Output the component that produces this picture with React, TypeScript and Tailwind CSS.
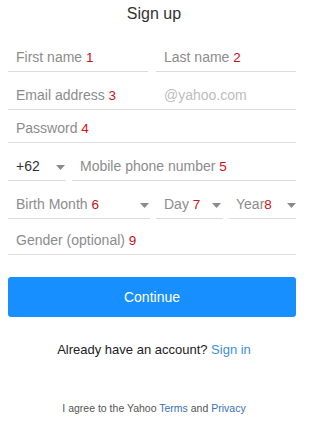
import React from 'react';

const font = { fontFamily: '"Liberation Sans", Arial, sans-serif' };

const Num = ({ n }: { n: string }) => (
  <span className="text-[13.5px] leading-none text-[#cc1020]">{n}</span>
);

const Caret = () => (
  <svg width="9" height="5" viewBox="0 0 9 5" className="shrink-0">
    <path d="M0 0h9L4.5 5z" fill="#8a8a8a" />
  </svg>
);

export default function App() {
  return (
    <div className="w-[308px] h-[427px] bg-white" style={font}>
      <h1 className="pt-1 text-center text-[16px] leading-5 text-[#333]">Sign up</h1>

      <form className="mt-3 ml-2 w-[288px] flex flex-col text-[14px] leading-5 text-[#8c8c8c]">
        <div className="h-[36px] grid grid-cols-2 gap-2">
          <div className="flex items-end pl-2 pb-1 border-b border-[#dcdcdc]">
            <span>First name <Num n="1" /></span>
          </div>
          <div className="flex items-end pl-2 pb-1 border-b border-[#dcdcdc]">
            <span>Last name <Num n="2" /></span>
          </div>
        </div>

        <div className="h-[38px] grid grid-cols-2 gap-2 border-b border-[#dcdcdc]">
          <div className="flex items-end pl-2 pb-1">
            <span>Email address <Num n="3" /></span>
          </div>
          <div className="flex items-end pl-2 pb-1 text-[#bdbdbd]">@yahoo.com</div>
        </div>

        <div className="h-[33px] flex items-end pl-2 pb-1 border-b border-[#dcdcdc]">
          <span>Password <Num n="4" /></span>
        </div>

        <div className="h-[38px] flex gap-[6px]">
          <div className="w-[58px] flex items-end justify-between pl-2 pr-[1px] pb-1 border-b border-[#dcdcdc] text-[#333]">
            <span>+62</span>
            <span className="mb-[6px]"><Caret /></span>
          </div>
          <div className="flex-1 flex items-end pl-2 pb-1 border-b border-[#dcdcdc]">
            <span>Mobile phone number <Num n="5" /></span>
          </div>
        </div>

        <div className="h-[38px] flex gap-[6px]">
          <div className="w-[142px] flex items-end justify-between pl-2 pr-[1px] pb-1 border-b border-[#dcdcdc]">
            <span>Birth Month <Num n="6" /></span>
            <span className="mb-[6px]"><Caret /></span>
          </div>
          <div className="w-[67px] flex items-end justify-between pl-2 pr-[2px] pb-1 border-b border-[#dcdcdc]">
            <span>Day <Num n="7" /></span>
            <span className="mb-[6px]"><Caret /></span>
          </div>
          <div className="flex-1 flex items-end justify-between pl-[7px] pb-1 border-b border-[#dcdcdc]">
            <span>Year<Num n="8" /></span>
            <span className="mb-[6px]"><Caret /></span>
          </div>
        </div>

        <div className="h-[36px] flex items-end pl-2 pb-1 border-b border-[#dcdcdc]">
          <span>Gender (optional) <Num n="9" /></span>
        </div>

        <button
          type="button"
          className="mt-[22px] h-[40px] w-full rounded-[3px] bg-[#188fff] text-[14px] text-white"
        >
          Continue
        </button>
      </form>

      <p className="mt-[25px] text-center text-[13px] leading-4 text-[#222]">
        Already have an account? <span className="text-[#3d8fd9]">Sign in</span>
      </p>

      <p className="mt-[43px] text-center text-[10.5px] leading-[14px] text-[#555]">
        I agree to the Yahoo <span className="text-[#3970b9]">Terms</span> and{' '}
        <span className="text-[#3970b9]">Privacy</span>
      </p>
    </div>
  );
}
